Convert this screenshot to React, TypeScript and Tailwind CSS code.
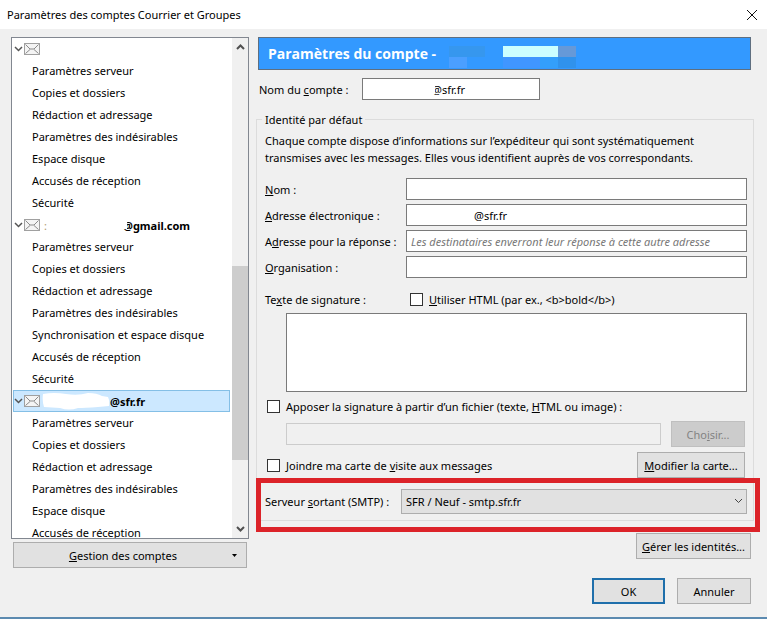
import clsx from "clsx";
import { useState } from "react";

const serverPages = [
  "Paramètres serveur",
  "Copies et dossiers",
  "Rédaction et adressage",
  "Paramètres des indésirables",
];

const accounts = [
  { id: "local", name: "", pages: [...serverPages, "Espace disque", "Accusés de réception", "Sécurité"] },
  {
    id: "gmail",
    name: "@gmail.com",
    pages: [...serverPages, "Synchronisation et espace disque", "Accusés de réception", "Sécurité"],
  },
  { id: "sfr", name: "@sfr.fr", pages: [...serverPages, "Espace disque", "Accusés de réception"] },
];

const field = "h-[22px] w-full min-w-0 border border-[#7a7a7a] bg-white px-1 outline-none";
const button = "h-[26px] border border-[#adadad] bg-[#e1e1e1] text-center whitespace-nowrap";
const checkbox = "size-[13px] shrink-0 appearance-none border border-[#333] bg-white checked:bg-[#0078d7]";

function Chevron({ className, up }: { className?: string; up?: boolean }) {
  return (
    <svg viewBox="0 0 9 6" className={clsx("h-[6px] w-[9px] shrink-0", className)} fill="none" stroke="currentColor">
      <path d={up ? "M1 5 4.500 1.500 8 5" : "M1 1 4.500 4.500 8 1"} />
    </svg>
  );
}

function MailIcon() {
  return (
    <svg viewBox="0 0 16 12" className="h-3 w-4 shrink-0" fill="none">
      <rect x="0.500" y="0.500" width="15" height="11" fill="#f4f4f4" stroke="#a0a0a0" />
      <path d="M1.500 1.500 6 6h4l4.500-4.500M1.500 10.500 6 6.500M14.500 10.500 10 6.500" stroke="#8a8a8a" />
    </svg>
  );
}

function AccountName({ id, name }: { id: string; name: string }) {
  if (id === "gmail") {
    return (
      <span className="flex flex-1 items-center">
        <span className="w-[83px] pl-1 text-[#b09a70]">:</span>
        <span className="relative font-bold">
          {name}
          <span className="absolute top-0 left-0 h-3 w-1 bg-white" />
        </span>
      </span>
    );
  }
  if (id === "sfr") {
    return (
      <span className="flex flex-1 items-center">
        <svg viewBox="0 0 70 18" className="h-[18px] w-[70px]" fill="#fff">
          <path d="M3 2Q14 0 26 2T48 1Q57 1 62 4L68 5Q70 9 69 14L58 15Q44 16 38 16Q29 19 20 16L4 15Q2 9 3 2Z" />
        </svg>
        <span className="font-bold">{name}</span>
      </span>
    );
  }
  return null;
}

function AccountTree() {
  const [selected, setSelected] = useState("sfr");

  return (
    <div className="flex h-[502px] border border-[#828790] bg-white">
      <ul className="min-w-0 flex-1 overflow-hidden pr-0.5 pl-px">
        {accounts.map((account) => (
          <li key={account.id}>
            <div
              onClick={() => setSelected(account.id)}
              className={clsx(
                "flex h-[22px] items-center border",
                selected === account.id ? "border-[#84bfe6] bg-[#cce8ff]" : "border-transparent",
              )}
            >
              <Chevron className="mr-px stroke-[1.5] text-[#555]" />
              <MailIcon />
              <AccountName id={account.id} name={account.name} />
            </div>
            <ul>
              {account.pages.map((page) => (
                <li key={page} className="h-[22px] pl-[19px] leading-[22px] whitespace-nowrap">
                  {page}
                </li>
              ))}
            </ul>
          </li>
        ))}
      </ul>
      <div className="flex w-4 flex-col items-center bg-[#f0f0f0] text-[#505050]">
        <Chevron up className="mt-1.5 stroke-2" />
        <div className="mt-[216px] h-[194px] w-full bg-[#cdcdcd]" />
        <Chevron className="mt-auto mb-1.5 stroke-2" />
      </div>
    </div>
  );
}

function Banner() {
  return (
    <h1 className="relative flex h-[33px] items-center border border-[#5f6f80] bg-[#3399ff] pl-[9px] font-['Open_Sans',sans-serif] text-[14px] font-bold text-white">
      Paramètres du compte -
      <svg viewBox="0 0 145 22" className="absolute top-2 left-[172px] h-[22px] w-[145px]">
        <path d="M18 11h18v11H18z" fill="#4b9fff" />
        <path d="M18 0h36v11H18z" fill="#3697ee" />
        <path d="M72 11h37v11H72z" fill="#4096ff" />
        <path d="M109 11h18v11h-18z" fill="#339ffb" />
        <path d="M72 0h55v11H72z" fill="#ccffff" />
        <path d="M127 0h18v11h-18z" fill="#6699d8" />
        <path d="M127 11h18v11h-18z" fill="#3092ec" />
      </svg>
    </h1>
  );
}

function IdentityFields() {
  return (
    <div className="grid grid-cols-[141px_1fr] items-center gap-y-1">
      <label htmlFor="name">
        <u>N</u>om :
      </label>
      <input id="name" className={field} />
      <label htmlFor="email">
        <u>A</u>dresse électronique :
      </label>
      <input id="email" defaultValue="@sfr.fr" className={clsx(field, "pl-[67px]")} />
      <label htmlFor="reply" className="whitespace-nowrap">
        A<u>d</u>resse pour la réponse :
      </label>
      <input
        id="reply"
        placeholder="Les destinataires enverront leur réponse à cette autre adresse"
        className={clsx(field, "placeholder:text-[#777] placeholder:italic")}
      />
      <label htmlFor="organisation">
        <u>O</u>rganisation :
      </label>
      <input id="organisation" className={field} />
    </div>
  );
}

function Signature() {
  return (
    <>
      <div className="mt-3 flex h-[18px] items-center">
        <label htmlFor="signature" className="w-[145px]">
          Te<u>x</u>te de signature :
        </label>
        <input id="html" type="checkbox" className={checkbox} />
        <label htmlFor="html" className="pl-1.5">
          <u>U</u>tiliser HTML (par ex., &lt;b&gt;bold&lt;/b&gt;)
        </label>
      </div>
      <div className="mt-[5px] pl-[21px]">
        <textarea id="signature" className="block h-[79px] w-full resize-none border border-[#7a7a7a] bg-white px-1 outline-none" />
      </div>
      <div className="mt-[5px] flex h-[18px] items-center pl-0.5">
        <input id="attach" type="checkbox" className={checkbox} />
        <label htmlFor="attach" className="pl-1.5">
          Apposer la signature à partir d’un fichier (texte, <u>H</u>TML ou image) :
        </label>
      </div>
      <div className="mt-[6px] flex items-center gap-[10px] pr-0.5 pl-[21px]">
        <input disabled aria-label="Fichier de signature" className="h-[22px] min-w-0 flex-1 border border-[#ccc] bg-[#f0f0f0]" />
        <button disabled className="h-[26px] w-[74px] border border-[#bfbfbf] bg-[#ccc] text-[#838383]">
          Cho<u>i</u>sir...
        </button>
      </div>
      <div className="mt-[5px] flex items-center pr-0.5 pl-0.5">
        <input id="vcard" type="checkbox" className={checkbox} />
        <label htmlFor="vcard" className="flex-1 pl-1.5">
          Joindre ma carte de <u>v</u>isite aux messages
        </label>
        <button className={clsx(button, "w-[108px]")}>
          <u>M</u>odifier la carte...
        </button>
      </div>
    </>
  );
}

function OutgoingServer() {
  return (
    <div className="relative mt-[11px] flex items-center">
      <label htmlFor="smtp" className="w-[136px] shrink-0">
        Serveur <u>s</u>ortant (SMTP) :
      </label>
      <div className="relative flex-1">
        <select id="smtp" className="block h-[25px] w-full appearance-none border border-[#adadad] bg-[#e1e1e1] px-1 outline-none">
          <option>SFR / Neuf - smtp.sfr.fr</option>
        </select>
        <Chevron className="pointer-events-none absolute top-[9px] right-1 text-[#444]" />
      </div>
      <div className="pointer-events-none absolute -top-[11px] -right-[13px] -bottom-[18px] -left-[9px] border-[5px] border-[#dc2329]" />
    </div>
  );
}

export default function App() {
  return (
    <div className="flex min-h-screen flex-col border-b-2 border-[#5c8ab0] bg-[#f0f0f0] font-['Noto_Sans','Open_Sans',sans-serif] text-[11px] leading-[17px] text-black">
      <header className="flex h-[29px] items-center justify-between bg-white pr-[9px] pl-[7px]">
        <span>Paramètres des comptes Courrier et Groupes</span>
        <button aria-label="Fermer">
          <svg viewBox="0 0 12 12" className="size-3" stroke="#111">
            <path d="M1 1l10 10M11 1 1 11" />
          </svg>
        </button>
      </header>

      <main className="flex flex-1 gap-[7px] pt-2 pr-[13px] pl-[11px]">
        <aside className="w-[238px] shrink-0">
          <AccountTree />
          <div className="mt-[3px] px-0.5">
            <button className={clsx(button, "flex w-full items-center pr-[9px]")}>
              <span className="flex-1">
                <u>G</u>estion des comptes
              </span>
              <svg viewBox="0 0 5 3" className="h-[3px] w-[5px]">
                <path d="M0 0h5L2.500 3z" />
              </svg>
            </button>
          </div>
        </aside>

        <section className="min-w-0 flex-1">
          <div className="pr-[3px] pl-0.5">
            <Banner />
            <div className="mt-2 flex items-center pl-px">
              <label htmlFor="account" className="w-[103px]">
                Nom du <u>c</u>ompte :
              </label>
              <div className="relative w-[178px]">
                <input id="account" defaultValue="@sfr.fr" className={clsx(field, "pl-[69px]")} />
                <span className="absolute top-1 left-[69px] h-3 w-1 bg-white" />
              </div>
            </div>
          </div>

          <fieldset className="mt-[11px] border border-[#dcdcdc] pr-[6px] pb-[6px] pl-2">
            <legend className="-ml-[3px] px-[3px]">Identité par défaut</legend>
            <p className="mt-1 mb-3">
              Chaque compte dispose d’informations sur l’expéditeur qui sont systématiquement transmises avec les
              messages. Elles vous identifient auprès de vos correspondants.
            </p>
            <IdentityFields />
            <Signature />
            <OutgoingServer />
          </fieldset>

          <div className="mt-3 flex justify-end pr-[3px]">
            <button className={clsx(button, "w-[115px]")}>
              <u>G</u>érer les identités...
            </button>
          </div>
          <div className="mt-[19px] flex justify-end gap-3 pr-[3px] pb-3">
            <button className="h-[26px] w-[73px] border-2 border-[#1f6fab] bg-[#e1e1e1]">OK</button>
            <button className={clsx(button, "w-[74px]")}>Annuler</button>
          </div>
        </section>
      </main>
    </div>
  );
}
